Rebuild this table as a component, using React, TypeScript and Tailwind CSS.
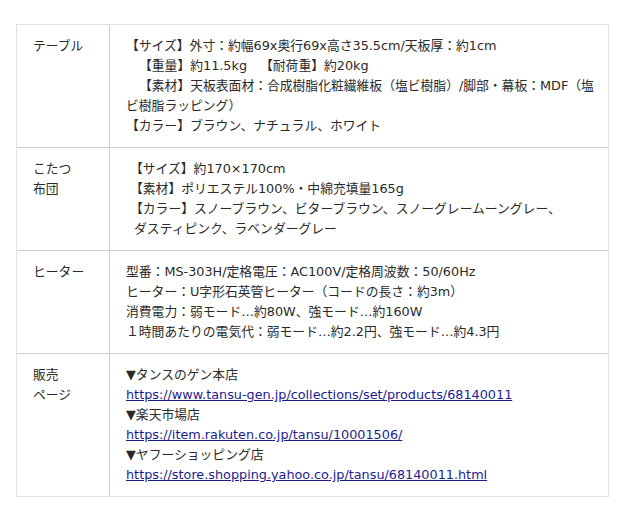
const Sp = () => <span className="inline-block w-[13px]" />;

const rows: { label: string[]; lines: React.ReactNode[]; indent?: boolean }[] = [
  {
    label: ['テーブル'],
    lines: [
      '【サイズ】外寸：約幅69x奥行69x高さ35.5cm/天板厚：約1cm',
      <>
        <Sp />【重量】約11.5kg<Sp />【耐荷重】約20kg
      </>,
      <>
        <Sp />【素材】天板表面材：合成樹脂化粧繊維板（塩ビ樹脂）/脚部・幕板：MDF（塩ビ樹脂ラッピング）
      </>,
      '【カラー】ブラウン、ナチュラル、ホワイト',
    ],
  },
  {
    label: ['こたつ', '布団'],
    indent: true,
    lines: [
      '【サイズ】約170×170cm',
      '【素材】ポリエステル100%・中綿充填量165g',
      '【カラー】スノーブラウン、ビターブラウン、スノーグレームーングレー、',
      '\u00a0ダスティピンク、ラベンダーグレー',
    ],
  },
  {
    label: ['ヒーター'],
    lines: [
      '型番：MS-303H/定格電圧：AC100V/定格周波数：50/60Hz',
      'ヒーター：U字形石英管ヒーター（コードの長さ：約3m）',
      '消費電力：弱モード…約80W、強モード…約160W',
      '１時間あたりの電気代：弱モード…約2.2円、強モード…約4.3円',
    ],
  },
];

const links = [
  { shop: '▼タンスのゲン本店', url: 'https://www.tansu-gen.jp/collections/set/products/68140011' },
  { shop: '▼楽天市場店', url: 'https://item.rakuten.co.jp/tansu/10001506/' },
  { shop: '▼ヤフーショッピング店', url: 'https://store.shopping.yahoo.co.jp/tansu/68140011.html' },
];

export default function App() {
  return (
    <div
      className="w-[640px] h-[521px] bg-white pt-6 pl-4 text-[12.8px] leading-5 text-[#2a2a2a]"
      style={{ fontFamily: '"DejaVu Sans", "Noto Sans CJK JP", sans-serif' }}
    >
      <div className="w-[593px] border border-[#e2e2e2]">
        {rows.map((row, i) => (
          <div key={i} className="flex border-b border-[#cfcfcf]">
            <div className="w-[93px] shrink-0 px-4 py-[11px] border-r border-[#cfcfcf]">
              {row.label.map((l) => (
                <div key={l}>{l}</div>
              ))}
            </div>
            <div className={`flex-1 py-[11px] pr-2 ${row.indent ? 'pl-5' : 'pl-4'}`}>
              {row.lines.map((l, j) => (
                <div key={j}>{l}</div>
              ))}
            </div>
          </div>
        ))}
        <div className="flex">
          <div className="w-[93px] shrink-0 px-4 py-[11px] border-r border-[#cfcfcf]">
            <div>販売</div>
            <div>ページ</div>
          </div>
          <div className="flex-1 py-[11px] pl-4 pr-2">
            {links.map((l) => (
              <div key={l.url}>
                <div>{l.shop}</div>
                <a href={l.url} className="text-[#1c1c8f] underline">
                  {l.url}
                </a>
              </div>
            ))}
          </div>
        </div>
      </div>
    </div>
  );
}
